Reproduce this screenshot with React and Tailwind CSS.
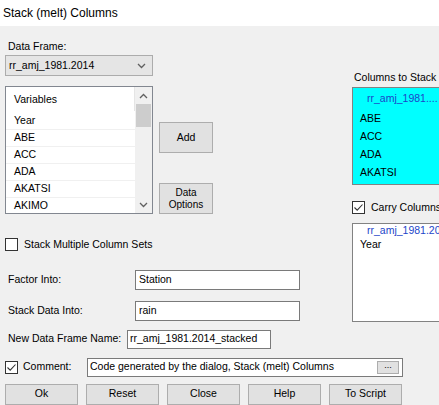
import React from 'react';

function Check({ checked }) {
  return (
    <span className="w-[13px] h-[13px] border border-[#333333] bg-white flex items-center justify-center shrink-0">
      {checked && (
        <svg width="11" height="11" viewBox="0 0 11 11">
          <path d="M1.5 5.5 L4.2 8.2 L9.5 2.5" fill="none" stroke="#333333" strokeWidth="1.1" />
        </svg>
      )}
    </span>
  );
}

function Chevron({ up, className }) {
  return (
    <svg width="9" height="6" viewBox="0 0 9 6" className={className}>
      <path d={up ? 'M1 5 L4.5 1.5 L8 5' : 'M1 1 L4.5 4.5 L8 1'} fill="none" stroke="#606060" strokeWidth="1.3" />
    </svg>
  );
}

function TextBox({ value, className }) {
  return (
    <div className={`h-[20px] border border-[#7a7a7a] bg-white px-[3px] flex items-center ${className}`}>
      {value}
    </div>
  );
}

const variables = ['Year', 'ABE', 'ACC', 'ADA', 'AKATSI', 'AKIMO'];
const stacked = ['ABE', 'ACC', 'ADA', 'AKATSI'];
const footer = ['Ok', 'Reset', 'Close', 'Help', 'To Script'];

export default function App() {
  return (
    <div className="w-[439px] h-[405px] overflow-hidden bg-[#f0f0f0] text-[10.5px] text-black font-['Liberation_Sans',Arial,sans-serif] flex flex-col">
      <div className="h-[26px] bg-white flex items-center pl-[3px] text-[12px] shrink-0">Stack (melt) Columns</div>

      <div className="flex">
        {/* left side */}
        <div className="w-[352px] shrink-0 pl-[5px] flex flex-col">
          <div className="mt-[13px] pl-[3px] h-[14px] leading-[14px]">Data Frame:</div>
          <div className="mt-[2px] w-[148px] h-[21px] bg-[#e5e5e5] border border-[#acacac] flex items-center justify-between pl-[3px] pr-[6px]">
            <span>rr_amj_1981.2014</span>
            <Chevron />
          </div>

          <div className="mt-[10px] flex">
            <div className="w-[148px] h-[128px] border border-[#828790] bg-white flex overflow-hidden">
              <div className="flex-1 flex flex-col">
                <div className="h-[26px] flex items-center pl-[8px] relative shrink-0">
                  Variables
                  <span className="absolute right-0 top-0 h-[24px] w-px bg-[#e5e5e5]" />
                </div>
                {variables.map((v) => (
                  <div key={v} className="h-[17px] shrink-0 flex items-center pl-[8px] border-b border-[#f0f0f0]">
                    {v}
                  </div>
                ))}
              </div>
              <div className="w-[17px] bg-[#f0f0f0] flex flex-col items-center shrink-0">
                <div className="h-[17px] flex items-center justify-center">
                  <Chevron up />
                </div>
                <div className="w-[15px] h-[23px] bg-[#cdcdcd]" />
                <div className="flex-1" />
                <div className="h-[17px] flex items-center justify-center">
                  <Chevron />
                </div>
              </div>
            </div>
            <div className="ml-[6px] pt-[36px] flex flex-col gap-[30px]">
              <button className="w-[54px] h-[31px] bg-[#e1e1e1] border border-[#adadad] text-[10.5px]">Add</button>
              <button className="w-[54px] h-[31px] bg-[#e1e1e1] border border-[#adadad] text-[10px] leading-[12px]">
                Data
                <br />
                Options
              </button>
            </div>
          </div>

          <div className="mt-[23px] flex items-center gap-[6px]">
            <Check />
            <span>Stack Multiple Column Sets</span>
          </div>

          <div className="mt-[17px] flex items-center">
            <span className="w-[130px] pl-[3px]">Factor Into:</span>
            <TextBox value="Station" className="w-[165px]" />
          </div>
          <div className="mt-[11px] flex items-center">
            <span className="w-[130px] pl-[3px]">Stack Data Into:</span>
            <TextBox value="rain" className="w-[165px]" />
          </div>
          <div className="mt-[9px] flex items-center">
            <span className="w-[122px] pl-[3px] whitespace-nowrap">New Data Frame Name:</span>
            <TextBox value="rr_amj_1981.2014_stacked" className="w-[144px] !h-[19px] !px-[2px]" />
          </div>
        </div>

        {/* right side */}
        <div className="flex-1 min-w-0 flex flex-col overflow-hidden">
          <div className="mt-[44px] pl-[2px] h-[14px] leading-[14px] whitespace-nowrap">Columns to Stack</div>
          <div className="mt-[3px] w-[100px] h-[98px] bg-[#00ffff] border border-[#828282] pt-[4px] flex flex-col whitespace-nowrap">
            <div className="h-[14px] flex items-center pl-[14px] text-[#1d46c9]">rr_amj_1981....</div>
            <div className="mt-[4px] flex flex-col">
              {stacked.map((s) => (
                <div key={s} className="h-[18px] flex items-center pl-[7px]">
                  {s}
                </div>
              ))}
            </div>
          </div>
          <div className="mt-[15px] flex items-center gap-[6px] whitespace-nowrap">
            <Check checked />
            <span>Carry Columns</span>
          </div>
          <div className="mt-[7px] w-[100px] h-[99px] bg-white border border-[#828282] flex flex-col whitespace-nowrap">
            <div className="h-[14px] flex items-center pl-[14px] text-[#1d46c9]">rr_amj_1981.2014</div>
            <div className="h-[14px] flex items-center pl-[7px]">Year</div>
          </div>
        </div>
      </div>

      <div className="mt-[9px] pl-[5px] flex items-center">
        <Check checked />
        <span className="ml-[5px] w-[64px]">Comment:</span>
        <div className="w-[316px] h-[19px] border border-[#7a7a7a] bg-white flex items-center pl-[2px] pr-[3px] justify-between">
          <span>Code generated by the dialog, Stack (melt) Columns</span>
          <span className="w-[22px] h-[13px] bg-[#e1e1e1] border border-[#adadad] flex items-center justify-center text-[9px] leading-none pb-[3px]">...</span>
        </div>
      </div>

      <div className="mt-[7px] pl-[5px] flex gap-[8px]">
        {footer.map((b) => (
          <button key={b} className="w-[73px] h-[21px] bg-[#e1e1e1] border border-[#adadad] text-[10.5px]">
            {b}
          </button>
        ))}
      </div>
    </div>
  );
}
